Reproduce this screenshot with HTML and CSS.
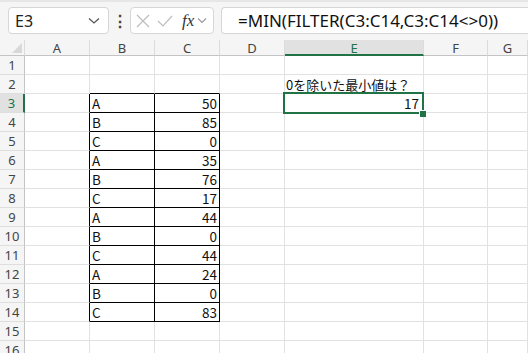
FILE: index.html
```html
<!DOCTYPE html>
<html lang="ja">
<head>
    <meta charset="UTF-8">
    <meta name="viewport" content="width=device-width, initial-scale=1.0">
    <title>MIN FILTER</title>
    <link rel="stylesheet" href="styles.css">
</head>
<body>

    <div class="toolbar">
        <div class="namebox">
            <span>E3</span>
            <svg width="12" height="8" viewBox="0 0 12 8"><path d="M1 1.5 L6 6 L11 1.5" fill="none" stroke="#555" stroke-width="1.3"/></svg>
        </div>
        <div class="dots">⋮</div>
        <div class="funcbox">
            <svg width="14" height="14" viewBox="0 0 14 14"><path d="M1 1 L13 13 M13 1 L1 13" stroke="#bdbdbd" stroke-width="1.2"/></svg>
            <svg width="16" height="14" viewBox="0 0 16 14"><path d="M1 7 L6 12 L15 2" fill="none" stroke="#bdbdbd" stroke-width="1.2"/></svg>
            <span class="fx">fx</span>
            <svg width="10" height="7" viewBox="0 0 10 7"><path d="M1 1.5 L5 5.5 L9 1.5" fill="none" stroke="#9a9a9a" stroke-width="1.2"/></svg>
        </div>
        <div class="formula">=MIN(FILTER(C3:C14,C3:C14&lt;&gt;0))</div>
    </div>

    <div class="sheet">
        <div class="hd corner"><i></i></div>
        <div class="hd">A</div><div class="hd">B</div><div class="hd">C</div><div class="hd">D</div><div class="hd active-col">E</div><div class="hd">F</div><div class="hd">G</div>

        <div class="rh">1</div><div></div><div></div><div></div><div></div><div></div><div></div><div></div>
        <div class="rh">2</div><div></div><div class="tb"></div><div class="tb"></div><div></div><div class="ja">0を除いた最小値は？</div><div></div><div></div>
        <div class="rh active-row">3</div><div class="tr"></div><div class="t">A</div><div class="t num">50</div><div></div><div class="num sel">17<i></i></div><div></div><div></div>
        <div class="rh">4</div><div class="tr"></div><div class="t">B</div><div class="t num">85</div><div></div><div></div><div></div><div></div>
        <div class="rh">5</div><div class="tr"></div><div class="t">C</div><div class="t num">0</div><div></div><div></div><div></div><div></div>
        <div class="rh">6</div><div class="tr"></div><div class="t">A</div><div class="t num">35</div><div></div><div></div><div></div><div></div>
        <div class="rh">7</div><div class="tr"></div><div class="t">B</div><div class="t num">76</div><div></div><div></div><div></div><div></div>
        <div class="rh">8</div><div class="tr"></div><div class="t">C</div><div class="t num">17</div><div></div><div></div><div></div><div></div>
        <div class="rh">9</div><div class="tr"></div><div class="t">A</div><div class="t num">44</div><div></div><div></div><div></div><div></div>
        <div class="rh">10</div><div class="tr"></div><div class="t">B</div><div class="t num">0</div><div></div><div></div><div></div><div></div>
        <div class="rh">11</div><div class="tr"></div><div class="t">C</div><div class="t num">44</div><div></div><div></div><div></div><div></div>
        <div class="rh">12</div><div class="tr"></div><div class="t">A</div><div class="t num">24</div><div></div><div></div><div></div><div></div>
        <div class="rh">13</div><div class="tr"></div><div class="t">B</div><div class="t num">0</div><div></div><div></div><div></div><div></div>
        <div class="rh">14</div><div class="tr"></div><div class="t">C</div><div class="t num">83</div><div></div><div></div><div></div><div></div>
        <div class="rh">15</div><div></div><div></div><div></div><div></div><div></div><div></div><div></div>
        <div class="rh">16</div><div></div><div></div><div></div><div></div><div></div><div></div><div></div>
    </div>

</body>
</html>
```

FILE: styles.css
```css
body {
    margin: 0;
    width: 528px;
    height: 353px;
    overflow: hidden;
    background: #fff;
    font-family: "Noto Sans CJK JP", "Noto Sans", sans-serif;
}

.toolbar {
    display: flex;
    align-items: flex-start;
    height: 40px;
    box-sizing: border-box;
    padding: 5px 0 0 8px;
    background: #f5f5f5;
    border-top: 2px solid #e6e6e6;
}

.namebox {
    display: flex;
    align-items: center;
    justify-content: space-between;
    width: 101px;
    height: 27px;
    padding: 0 8px 0 6px;
    box-sizing: border-box;
    background: #fff;
    border: 1px solid #d6d6d6;
    border-radius: 4px;
    font-family: "Noto Sans", sans-serif;
    font-size: 16px;
    color: #222;
}

.dots {
    width: 21px;
    text-align: center;
    font-size: 16px;
    line-height: 26px;
    font-weight: bold;
    color: #444;
}

.funcbox {
    display: flex;
    align-items: center;
    gap: 7px;
    width: 84px;
    height: 27px;
    padding: 0 4px 0 5px;
    box-sizing: border-box;
    background: #fff;
    border: 1px solid #d6d6d6;
    border-radius: 4px;
}

.fx {
    font-family: "Liberation Serif", serif;
    font-style: italic;
    font-size: 17px;
    color: #333;
    margin-left: 2px;
    margin-right: -4px;
}

.formula {
    flex: 1;
    height: 27px;
    margin-left: 7px;
    padding-left: 16px;
    box-sizing: border-box;
    background: #fff;
    border: 1px solid #d6d6d6;
    border-right: none;
    border-radius: 4px 0 0 4px;
    font-family: "Noto Sans", sans-serif;
    font-size: 17px;
    line-height: 25px;
    color: #111;
    white-space: nowrap;
}

.sheet {
    display: grid;
    grid-template-columns: 25px 65px 65px 65px 65px 139px 64px 1fr;
    grid-template-rows: 16px;
    grid-auto-rows: 19px;
}

.sheet > div {
    box-sizing: border-box;
    border-right: 1px solid #e1e1e1;
    border-bottom: 1px solid #e1e1e1;
    padding: 0 2px;
    font-size: 13.5px;
    line-height: 19px;
    color: #111;
    white-space: nowrap;
}

.sheet > .hd {
    background: #f5f5f5;
    border-right-color: #dcdcdc;
    border-bottom-color: #c4c4c4;
    text-align: center;
    font-family: "Noto Sans", sans-serif;
    font-size: 13px;
    line-height: 16px;
    color: #444;
}

.sheet > .corner {
    display: flex;
    align-items: flex-end;
    justify-content: flex-end;
    padding: 0 2px 2px 0;
}

.corner i {
    width: 0;
    height: 0;
    border-left: 10px solid transparent;
    border-bottom: 10px solid #d8d8d8;
}

.sheet > .active-col {
    background: #e1e1e1;
    border-bottom: 2px solid #217346;
    color: #217346;
}

.sheet > .rh {
    background: #f5f5f5;
    border-right-color: #c4c4c4;
    border-bottom-color: #dedede;
    text-align: center;
    font-family: "Noto Sans", sans-serif;
    font-size: 13px;
    color: #444;
}

.sheet > .active-row {
    background: #e1e1e1;
    border-right: 2px solid #217346;
    color: #217346;
}

.sheet > .t {
    border-right-color: #000;
    border-bottom-color: #000;
}

.sheet > .tb {
    border-bottom-color: #000;
}

.sheet > .tr {
    border-right-color: #000;
}

.sheet > .num {
    text-align: right;
}

.sheet > .ja {
    padding-left: 1px;
    font-size: 13px;
}

.sheet > .sel {
    position: relative;
    padding-right: 4px;
}

.sel::before {
    content: "";
    position: absolute;
    left: -2px;
    top: -2px;
    right: -1px;
    bottom: -2px;
    border: 2px solid #217346;
}

.sel i {
    position: absolute;
    right: -3px;
    bottom: -5px;
    width: 6px;
    height: 6px;
    background: #217346;
    border-left: 1px solid #fff;
    border-top: 1px solid #fff;
}
```
